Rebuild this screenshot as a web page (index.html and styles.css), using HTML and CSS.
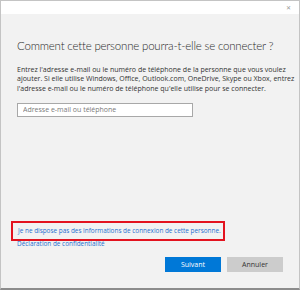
FILE: index.html
```html
<!DOCTYPE html>
<html lang="fr">
<head>
    <meta charset="UTF-8">
    <meta name="viewport" content="width=device-width, initial-scale=1.0">
    <title>Compte Microsoft</title>
    <link rel="stylesheet" href="styles.css">
</head>
<body>
    <div class="window">
        <div class="titlebar">
            <span class="close">&#x2715;</span>
        </div>
        <div class="content">
            <h1>Comment cette personne pourra-t-elle se connecter ?</h1>
            <p class="intro">
                Entrez l'adresse e-mail ou le numéro de téléphone de la personne que vous voulez<br>
                ajouter. Si elle utilise Windows, Office, Outlook.com, OneDrive, Skype ou Xbox, entrez<br>
                l'adresse e-mail ou le numéro de téléphone qu'elle utilise pour se connecter.
            </p>
            <input class="field" type="text" placeholder="Adresse e-mail ou téléphone">

            <div class="links">
                <div class="highlight">
                    <a href="#" class="link">Je ne dispose pas des informations de connexion de cette personne.</a>
                </div>
                <a href="#" class="link privacy">Déclaration de confidentialité</a>
            </div>

            <div class="actions">
                <button class="btn primary">Suivant</button>
                <button class="btn">Annuler</button>
            </div>
        </div>
    </div>
</body>
</html>
```

FILE: styles.css
```css
        body {
            margin: 0;
            padding: 0;
            font-family: 'Open Sans', 'Noto Sans', sans-serif;
            color: #333;
        }
        .window {
            width: 300px;
            height: 290px;
            box-sizing: border-box;
            border: 1px solid #c4c4c4;
            border-bottom: 2px solid #8c8c8c;
            display: flex;
            flex-direction: column;
            background-color: #f2f2f2;
        }
        .titlebar {
            height: 13px;
            background-color: #fff;
            display: flex;
            justify-content: flex-end;
            align-items: center;
            padding-right: 8px;
        }
        .close {
            font-size: 6px;
            color: #999;
            line-height: 1;
        }
        .content {
            flex: 1;
            display: flex;
            flex-direction: column;
            padding: 23px 16px 0 16px;
        }
        h1 {
            font-family: 'Lato', 'Open Sans', sans-serif;
            font-weight: 300;
            font-size: 11.5px;
            letter-spacing: -0.2px;
            line-height: 18px;
            margin: 0;
            color: #2b2b2b;
            white-space: nowrap;
        }
        .intro {
            font-size: 7px;
            line-height: 9.3px;
            margin: 10px 0 0 0;
            color: #333;
            white-space: nowrap;
        }
        .field {
            width: 176px;
            height: 14px;
            box-sizing: border-box;
            margin: 10px 0 0 0;
            border: 1px solid #a8a8a8;
            background-color: #fff;
            font-family: inherit;
            font-size: 7px;
            padding: 0 5px;
            outline: none;
        }
        .field::placeholder {
            color: #7a7a7a;
        }
        .links {
            margin-top: auto;
            display: flex;
            flex-direction: column;
            align-items: flex-start;
        }
        .highlight {
            margin-left: -6px;
            padding: 3px 2px 3px 5px;
            border: 2px solid #e3131f;
            font-size: 6.4px;
            line-height: 10px;
        }
        .link {
            font-size: 6.4px;
            line-height: 10px;
            color: #1f6fd0;
            text-decoration: none;
            white-space: nowrap;
        }
        .privacy {
            margin-top: -2px;
        }
        .actions {
            display: flex;
            justify-content: flex-end;
            gap: 6px;
            margin: 8px 0 16px 0;
        }
        .btn {
            width: 56px;
            height: 15px;
            border: none;
            background-color: #cccccc;
            color: #333;
            font-family: inherit;
            font-size: 7px;
            padding: 0;
        }
        .btn.primary {
            background-color: #0078d7;
            color: #fff;
        }
```
